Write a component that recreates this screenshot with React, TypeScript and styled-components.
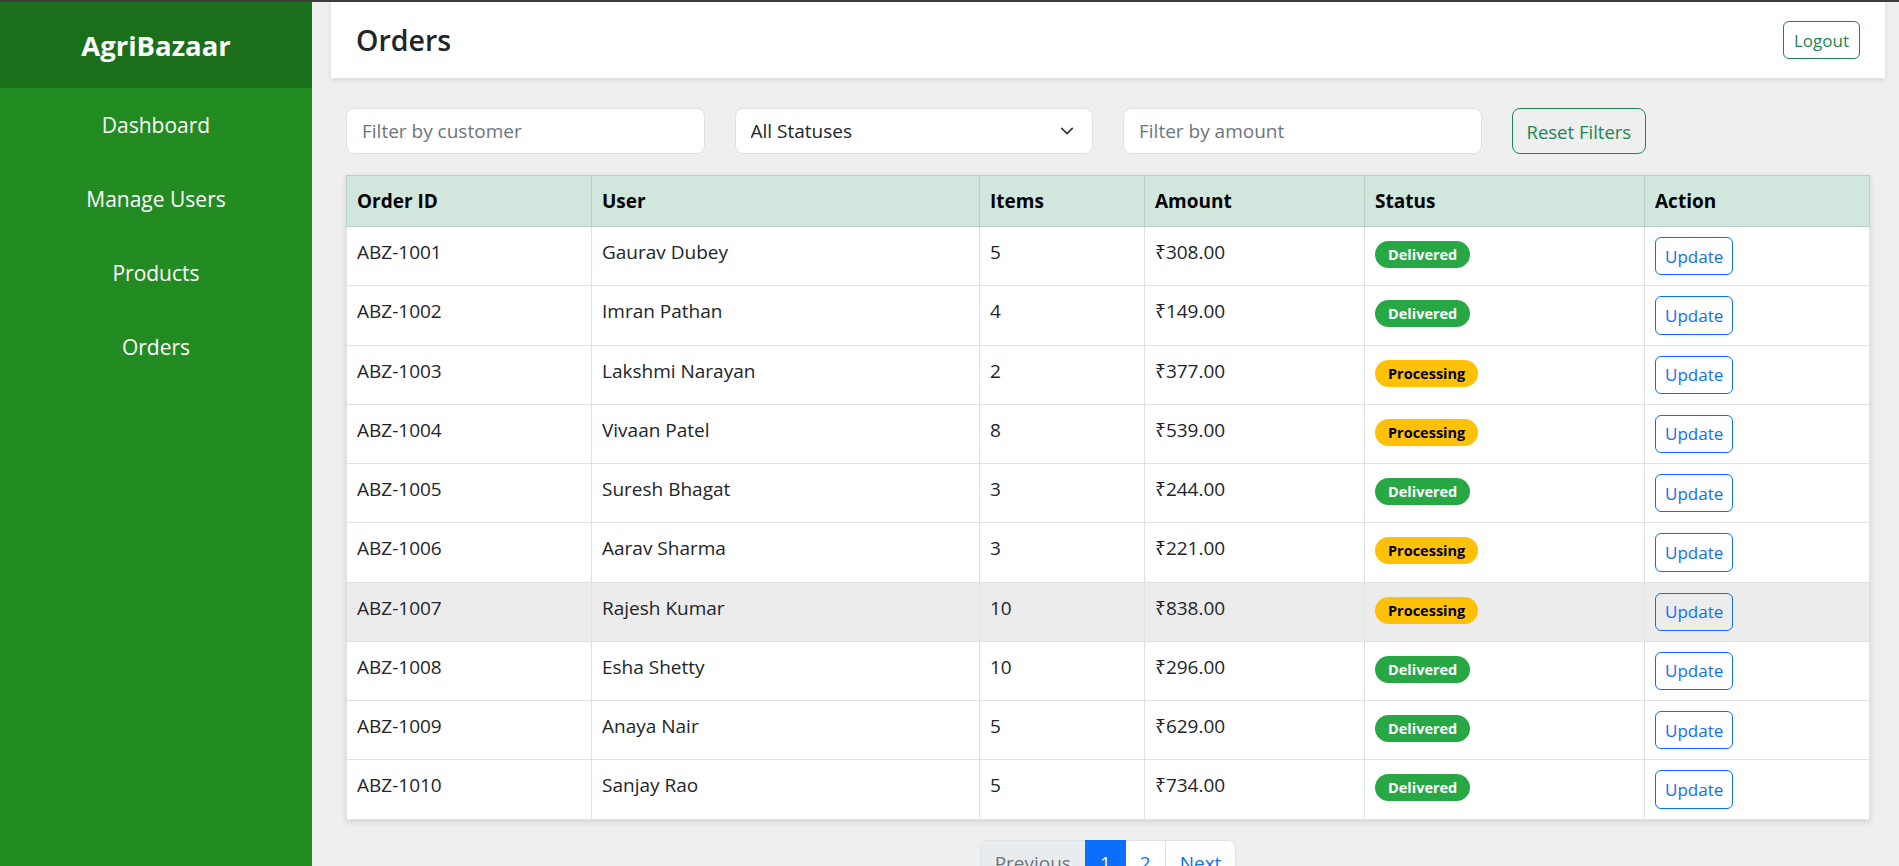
import React from "react";
import styled, { createGlobalStyle, css } from "styled-components";

const GlobalStyle = createGlobalStyle`
  html, body { margin: 0; padding: 0; }
  body {
    font-family: "Open Sans", "Noto Sans", "DejaVu Sans", sans-serif;
    background: #efefef;
    border-top: 2px solid #3b3b3b;
    color: #212529;
  }
  * { box-sizing: border-box; }
`;

const Shell = styled.div`
  display: flex;
  min-height: calc(100vh - 2px);
`;

const Sidebar = styled.aside`
  width: 312px;
  flex-shrink: 0;
  background: #228b22;
  color: #fff;
  display: flex;
  flex-direction: column;
`;

const Brand = styled.div`
  height: 86px;
  background: #1b6f1b;
  display: flex;
  align-items: center;
  justify-content: center;
  font-size: 27.5px;
  font-weight: 700;
`;

const NavItem = styled.a`
  height: 74px;
  display: flex;
  align-items: center;
  justify-content: center;
  font-size: 21px;
  color: #fff;
  text-decoration: none;
`;

const Main = styled.main`
  flex: 1;
  min-width: 0;
  padding: 0 14px 0 19px;
`;

const TopBar = styled.header`
  height: 76px;
  background: #fff;
  box-shadow: 0 2px 5px rgba(0, 0, 0, 0.1);
  display: flex;
  align-items: center;
  justify-content: space-between;
  padding: 0 25px;
`;

const Title = styled.h1`
  margin: 0;
  font-size: 28.5px;
  font-weight: 600;
  color: #212529;
`;

const OutlineButton = styled.button<{ $size: "sm" | "md" }>`
  background: transparent;
  border: 1px solid #198754;
  color: #198754;
  font-family: inherit;
  cursor: pointer;
  ${(p) =>
    p.$size === "sm"
      ? css`
          height: 38px;
          padding: 0 10px;
          border-radius: 6px;
          font-size: 17px;
        `
      : css`
          height: 46px;
          padding: 0 14px;
          border-radius: 8px;
          font-size: 18.5px;
          justify-self: start;
        `}
`;

const Content = styled.section`
  padding: 30px 15px 0 15px;
`;

const Filters = styled.div`
  display: grid;
  grid-template-columns: repeat(4, 1fr);
  column-gap: 30px;
  margin-bottom: 21px;
`;

const fieldBase = css`
  height: 46px;
  width: 100%;
  border: 1px solid #dee2e6;
  border-radius: 8px;
  background: #fff;
  padding: 0 15px;
  font-family: inherit;
  font-size: 19px;
  color: #212529;
  outline: none;
`;

const TextInput = styled.input`
  ${fieldBase}
  &::placeholder {
    color: #6c757d;
  }
`;

const SelectWrap = styled.div`
  position: relative;
`;

const Select = styled.select`
  ${fieldBase}
  appearance: none;
  -webkit-appearance: none;
`;

const Chevron = styled.svg`
  position: absolute;
  right: 18px;
  top: 16px;
  pointer-events: none;
`;

const Table = styled.table`
  width: 100%;
  border-collapse: collapse;
  table-layout: fixed;
  background: #fff;
  box-shadow: 0 2px 6px rgba(0, 0, 0, 0.12);
`;

const Th = styled.th`
  background: #d1e7dd;
  border: 1px solid #bcd0c7;
  padding: 10px;
  text-align: left;
  font-size: 19px;
  line-height: 30px;
  font-weight: 700;
  color: #000;
`;

const Tr = styled.tr<{ $hover?: boolean }>`
  background: ${(p) => (p.$hover ? "#ececec" : "#fff")};
`;

const Td = styled.td`
  border: 1px solid #dee2e6;
  padding: 10px;
  font-size: 19px;
  line-height: 30px;
  vertical-align: top;
  color: #212529;
`;

const Badge = styled.span<{ $status: "Delivered" | "Processing" }>`
  display: inline-block;
  vertical-align: top;
  margin-top: 4px;
  height: 27px;
  line-height: 27px;
  padding: 0 13px;
  border-radius: 14px;
  font-size: 14.5px;
  font-weight: 700;
  ${(p) =>
    p.$status === "Delivered"
      ? css`
          background: #28a745;
          color: #fff;
        `
      : css`
          background: #ffc107;
          color: #000;
        `}
`;

const UpdateButton = styled.button`
  display: block;
  height: 38.25px;
  padding: 0 9px;
  border: 1px solid #0d6efd;
  border-radius: 6px;
  background: transparent;
  color: #0d6efd;
  font-family: inherit;
  font-size: 17px;
  cursor: pointer;
`;

const Pagination = styled.nav`
  display: flex;
  justify-content: center;
  margin-top: 20px;
`;

const PageLink = styled.a<{ $state: "disabled" | "active" | "normal" }>`
  height: 47px;
  display: flex;
  align-items: center;
  padding: 0 14px;
  border: 1px solid #dee2e6;
  margin-left: -1px;
  font-size: 19px;
  text-decoration: none;
  &:first-child {
    margin-left: 0;
    border-radius: 8px 0 0 8px;
  }
  &:last-child {
    border-radius: 0 8px 8px 0;
  }
  ${(p) =>
    p.$state === "disabled"
      ? css`
          background: #e9ecef;
          color: #6c757d;
        `
      : p.$state === "active"
      ? css`
          background: #0d6efd;
          border-color: #0d6efd;
          color: #fff;
          position: relative;
        `
      : css`
          background: #fff;
          color: #0d6efd;
        `}
`;

type Status = "Delivered" | "Processing";
const orders: { id: string; user: string; items: number; amount: string; status: Status }[] = [
  { id: "ABZ-1001", user: "Gaurav Dubey", items: 5, amount: "308.00", status: "Delivered" },
  { id: "ABZ-1002", user: "Imran Pathan", items: 4, amount: "149.00", status: "Delivered" },
  { id: "ABZ-1003", user: "Lakshmi Narayan", items: 2, amount: "377.00", status: "Processing" },
  { id: "ABZ-1004", user: "Vivaan Patel", items: 8, amount: "539.00", status: "Processing" },
  { id: "ABZ-1005", user: "Suresh Bhagat", items: 3, amount: "244.00", status: "Delivered" },
  { id: "ABZ-1006", user: "Aarav Sharma", items: 3, amount: "221.00", status: "Processing" },
  { id: "ABZ-1007", user: "Rajesh Kumar", items: 10, amount: "838.00", status: "Processing" },
  { id: "ABZ-1008", user: "Esha Shetty", items: 10, amount: "296.00", status: "Delivered" },
  { id: "ABZ-1009", user: "Anaya Nair", items: 5, amount: "629.00", status: "Delivered" },
  { id: "ABZ-1010", user: "Sanjay Rao", items: 5, amount: "734.00", status: "Delivered" },
];

const colWidths = [245, 388, 165, 220, 280, 225];

export default function App() {
  return (
    <>
      <GlobalStyle />
      <Shell>
        <Sidebar>
          <Brand>AgriBazaar</Brand>
          <NavItem href="#">Dashboard</NavItem>
          <NavItem href="#">Manage Users</NavItem>
          <NavItem href="#">Products</NavItem>
          <NavItem href="#">Orders</NavItem>
        </Sidebar>
        <Main>
          <TopBar>
            <Title>Orders</Title>
            <OutlineButton $size="sm">Logout</OutlineButton>
          </TopBar>
          <Content>
            <Filters>
              <TextInput placeholder="Filter by customer" />
              <SelectWrap>
                <Select defaultValue="all">
                  <option value="all">All Statuses</option>
                  <option value="Delivered">Delivered</option>
                  <option value="Processing">Processing</option>
                </Select>
                <Chevron width="16" height="14" viewBox="0 0 16 16" fill="none">
                  <path d="M2 5l6 6 6-6" stroke="#343a40" strokeWidth="2" strokeLinecap="round" strokeLinejoin="round" />
                </Chevron>
              </SelectWrap>
              <TextInput placeholder="Filter by amount" />
              <OutlineButton $size="md">Reset Filters</OutlineButton>
            </Filters>
            <Table>
              <colgroup>
                {colWidths.map((w, i) => (
                  <col key={i} style={{ width: w }} />
                ))}
              </colgroup>
              <thead>
                <tr>
                  <Th>Order ID</Th>
                  <Th>User</Th>
                  <Th>Items</Th>
                  <Th>Amount</Th>
                  <Th>Status</Th>
                  <Th>Action</Th>
                </tr>
              </thead>
              <tbody>
                {orders.map((o) => (
                  <Tr key={o.id} $hover={o.id === "ABZ-1007"}>
                    <Td>{o.id}</Td>
                    <Td>{o.user}</Td>
                    <Td>{o.items}</Td>
                    <Td>₹{o.amount}</Td>
                    <Td>
                      <Badge $status={o.status}>{o.status}</Badge>
                    </Td>
                    <Td>
                      <UpdateButton>Update</UpdateButton>
                    </Td>
                  </Tr>
                ))}
              </tbody>
            </Table>
            <Pagination>
              <PageLink $state="disabled">Previous</PageLink>
              <PageLink $state="active">1</PageLink>
              <PageLink $state="normal" href="#">2</PageLink>
              <PageLink $state="normal" href="#">Next</PageLink>
            </Pagination>
          </Content>
        </Main>
      </Shell>
    </>
  );
}
